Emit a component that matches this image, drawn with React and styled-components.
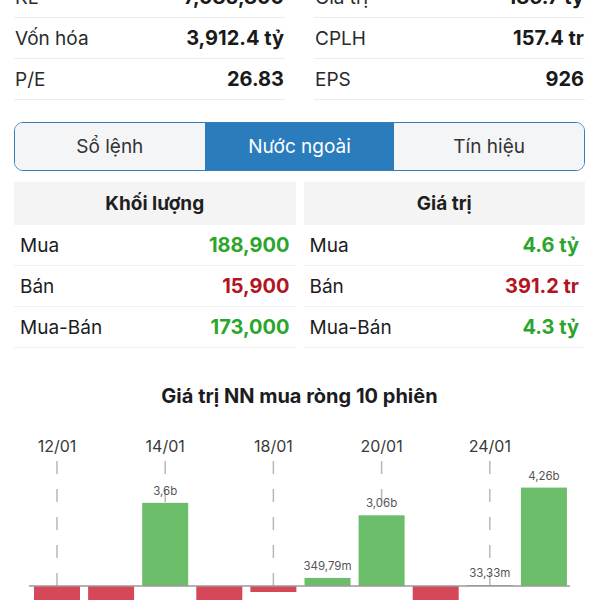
import React from 'react';
import styled, { createGlobalStyle } from 'styled-components';

const GlobalStyle = createGlobalStyle`
  html, body {
    margin: 0;
    padding: 0;
    background: #ffffff;
    overflow: hidden;
  }
  body {
    font-family: Inter, "Noto Sans", "DejaVu Sans", sans-serif;
    color: #1c1c1e;
  }
`;

const Page = styled.div`
  width: 600px;
  height: 600px;
  overflow: hidden;
  box-sizing: border-box;
`;

const Content = styled.div`
  margin-top: -23px;
  padding: 0 15px 0 14px;
`;

const StatsGrid = styled.div`
  display: grid;
  grid-template-columns: 1fr 1fr;
  column-gap: 29px;
`;

const StatCell = styled.div`
  display: flex;
  align-items: center;
  justify-content: space-between;
  height: 40px;
  border-bottom: 1px solid #ededed;
  font-size: 19px;
  padding: 0 1px;
`;

const StatLabel = styled.span`
  color: #2a2a2a;
`;

const StatValue = styled.span`
  font-weight: 700;
  font-size: 20px;
  color: #1a1a1a;
`;

const TabBar = styled.div`
  display: grid;
  grid-template-columns: repeat(3, 1fr);
  height: 49px;
  margin-top: 22px;
  border: 1.5px solid #3a7db6;
  border-radius: 9px;
  overflow: hidden;
  box-sizing: border-box;
`;

const Tab = styled.div`
  display: flex;
  align-items: center;
  justify-content: center;
  font-size: 19px;
  background: ${({ $active }) => ($active ? '#2b7cbd' : '#f4f5f6')};
  color: ${({ $active }) => ($active ? '#ffffff' : '#333333')};
`;

const ForeignGrid = styled.div`
  display: grid;
  grid-template-columns: 1fr 1fr;
  column-gap: 8px;
  margin-top: 11px;
`;

const ForeignHeader = styled.div`
  display: flex;
  align-items: center;
  justify-content: center;
  height: 43px;
  background: #f4f4f4;
  font-size: 19px;
  font-weight: 700;
  color: #1f1f1f;
`;

const ForeignRow = styled.div`
  display: flex;
  align-items: center;
  justify-content: space-between;
  height: 40px;
  border-bottom: 1px solid #f0f0f0;
  padding: 0 6px;
  font-size: 19px;
`;

const ForeignValue = styled.span`
  font-weight: 700;
  font-size: 20px;
  color: ${({ $tone }) => ($tone === 'down' ? '#b3141f' : '#2ca52d')};
`;

const ChartTitle = styled.div`
  margin-top: 35px;
  text-align: center;
  font-size: 20px;
  line-height: 26px;
  font-weight: 700;
  color: #1c1c1e;
`;

const ChartWrap = styled.div`
  margin: 0 -15px 0 -14px;
  height: 200px;
`;

const stats = [
  ['KL', '7,085,800', 'Giá trị', '186.7 tỷ'],
  ['Vốn hóa', '3,912.4 tỷ', 'CPLH', '157.4 tr'],
  ['P/E', '26.83', 'EPS', '926'],
];

const volume = [
  ['Mua', '188,900', 'up'],
  ['Bán', '15,900', 'down'],
  ['Mua-Bán', '173,000', 'up'],
];

const value = [
  ['Mua', '4.6 tỷ', 'up'],
  ['Bán', '391.2 tr', 'down'],
  ['Mua-Bán', '4.3 tỷ', 'up'],
];

// net foreign value per session, in billions
const bars = [
  { v: -1.4 },
  { v: -1.2 },
  { v: 3.6, label: '3,6b' },
  { v: -1.1 },
  { v: -0.26 },
  { v: 0.3498, label: '349,79m' },
  { v: 3.06, label: '3,06b' },
  { v: -1.3 },
  { v: 0.0333, label: '33,33m' },
  { v: 4.26, label: '4,26b' },
];
const dates = ['12/01', '14/01', '18/01', '20/01', '24/01'];

const TOP = 409;
const BASE = 586 - TOP;
const SCALE = 23.1;
const BAR_W = 46;

const Chart = () => {
  const cx = (i) => 57 + i * 54.1;
  return (
    <svg width="600" height="200" viewBox="0 0 600 200">
      {dates.map((d, k) => {
        const x = cx(k * 2);
        return (
          <g key={d}>
            <text
              x={x}
              y={446 - TOP + 6}
              textAnchor="middle"
              fontSize="16"
              fontFamily="Inter, sans-serif"
              fill="#3a3a3a"
            >
              {d}
            </text>
            <line
              x1={x}
              x2={x}
              y1={461 - TOP}
              y2={BASE}
              stroke="#b8b8b8"
              strokeWidth="1.5"
              strokeDasharray="13 15"
            />
          </g>
        );
      })}
      {bars.map((b, i) => {
        const h = Math.max(Math.abs(b.v) * SCALE, 1);
        const x = cx(i) - BAR_W / 2;
        const y = b.v >= 0 ? BASE - h : BASE;
        return (
          <g key={i}>
            <rect x={x} y={y} width={BAR_W} height={h} fill={b.v >= 0 ? '#6bbd69' : '#d6475a'} />
            {b.label && (
              <text
                x={cx(i)}
                y={y - 8}
                textAnchor="middle"
                fontSize="11.5"
                fontFamily="Inter, sans-serif"
                fill="#555"
              >
                {b.label}
              </text>
            )}
          </g>
        );
      })}
      <line x1="29" x2="570" y1={BASE} y2={BASE} stroke="#9a9a9a" strokeWidth="1.5" />
    </svg>
  );
};

const App = () => (
  <Page>
    <GlobalStyle />
    <Content>
      <StatsGrid>
        {stats.map(([l1, v1, l2, v2]) => (
          <React.Fragment key={l1}>
            <StatCell>
              <StatLabel>{l1}</StatLabel>
              <StatValue>{v1}</StatValue>
            </StatCell>
            <StatCell>
              <StatLabel>{l2}</StatLabel>
              <StatValue>{v2}</StatValue>
            </StatCell>
          </React.Fragment>
        ))}
      </StatsGrid>

      <TabBar>
        <Tab>Sổ lệnh</Tab>
        <Tab $active>Nước ngoài</Tab>
        <Tab>Tín hiệu</Tab>
      </TabBar>

      <ForeignGrid>
        <div>
          <ForeignHeader>Khối lượng</ForeignHeader>
          {volume.map(([label, val, tone]) => (
            <ForeignRow key={label}>
              <span>{label}</span>
              <ForeignValue $tone={tone}>{val}</ForeignValue>
            </ForeignRow>
          ))}
        </div>
        <div>
          <ForeignHeader>Giá trị</ForeignHeader>
          {value.map(([label, val, tone]) => (
            <ForeignRow key={label}>
              <span>{label}</span>
              <ForeignValue $tone={tone}>{val}</ForeignValue>
            </ForeignRow>
          ))}
        </div>
      </ForeignGrid>

      <ChartTitle>Giá trị NN mua ròng 10 phiên</ChartTitle>
      <ChartWrap>
        <Chart />
      </ChartWrap>
    </Content>
  </Page>
);

export default App;
